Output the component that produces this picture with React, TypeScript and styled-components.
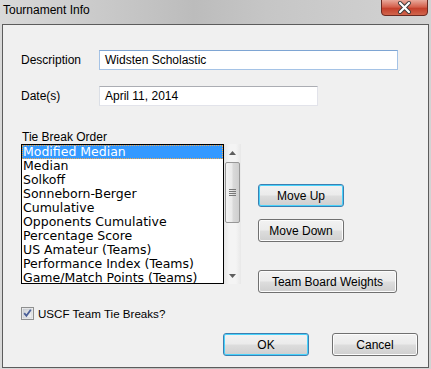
import { FunctionComponent } from 'react';
import styled, { createGlobalStyle, css } from 'styled-components';

const GlobalStyle = createGlobalStyle`
  html, body {
    margin: 0;
    padding: 0;
    background: #c8c8c8;
  }
  body {
    font-family: 'Liberation Sans', Arial, sans-serif;
  }
`;

const WindowRoot = styled.div`
  width: 431px;
  height: 369px;
  box-sizing: border-box;
  padding: 0 2px 1px 2px;
  display: flex;
  flex-direction: column;
  background: linear-gradient(
    90deg,
    #d9d9d9 0%,
    #cdcdcd 18%,
    #bcbcbc 45%,
    #c6c6c6 62%,
    #d3d3d3 100%
  );
`;

const TitleBar = styled.div`
  height: 24px;
  display: flex;
  align-items: flex-start;
  justify-content: space-between;
  padding-left: 1px;
`;

const TitleText = styled.span`
  margin-top: 3px;
  font-size: 12px;
  line-height: 14px;
  color: #000;
`;

const CloseButton = styled.div`
  width: 47px;
  height: 16px;
  margin-right: 1px;
  display: flex;
`;

const Frame = styled.div`
  flex: 1;
  box-sizing: border-box;
  width: 427px;
  border: 1px solid #5c5c5c;
  background: #f0f0f0;
  display: flex;
  flex-direction: column;
  padding: 25px 10px 11px 18px;
  font-size: 12px;
  color: #000;
`;

const FieldRow = styled.div<{ $gap?: number }>`
  display: flex;
  align-items: center;
  height: 20px;
  margin-top: ${(p) => p.$gap ?? 0}px;
`;

const Label = styled.span`
  width: 78px;
  line-height: 14px;
`;

const TextBox = styled.div<{ $width: number; $focus?: boolean }>`
  box-sizing: border-box;
  width: ${(p) => p.$width}px;
  height: 20px;
  background: #fff;
  padding-left: 5px;
  display: flex;
  align-items: center;
  ${(p) =>
    p.$focus
      ? css`
          border: 1px solid #a5c3e6;
          border-top-color: #7ea5d3;
        `
      : css`
          border: 1px solid #e2e3ea;
          border-top-color: #abadb3;
          border-left-color: #dbdfe6;
        `}
`;

const SectionLabel = styled.div`
  margin-top: 24px;
  margin-left: 1px;
  line-height: 14px;
  height: 14px;
`;

const MainArea = styled.div`
  display: flex;
  align-items: flex-start;
`;

const ListWrap = styled.div`
  display: flex;
  height: 140px;
`;

const ListBox = styled.ul`
  box-sizing: border-box;
  width: 203px;
  height: 140px;
  margin: 0;
  padding: 0;
  list-style: none;
  border: 1px solid #000;
  background: #fff;
  overflow: hidden;
  font-family: 'DejaVu Sans', Verdana, sans-serif;
  font-size: 12.5px;
`;

const ListItem = styled.li<{ $selected?: boolean }>`
  height: 14px;
  line-height: 14px;
  padding-left: 1px;
  white-space: nowrap;
  ${(p) =>
    p.$selected &&
    css`
      background: #3399ff;
      color: #fff;
      outline: 1px dotted #f5a94a;
      outline-offset: -1px;
    `}
`;

const ScrollBar = styled.div`
  width: 17px;
  height: 140px;
  box-sizing: border-box;
  display: flex;
  flex-direction: column;
  align-items: center;
  background: linear-gradient(90deg, #e6e6e6 0%, #f4f4f4 30%, #f4f4f4 70%, #e8e8e8 100%);
`;

const ArrowBox = styled.div`
  height: 17px;
  width: 17px;
  display: flex;
  align-items: center;
  justify-content: center;
`;

const Thumb = styled.div`
  box-sizing: border-box;
  width: 15px;
  height: 61px;
  margin-top: 1px;
  border: 1px solid #979797;
  border-radius: 2px;
  background: linear-gradient(90deg, #f4f4f4 0%, #eaeaea 45%, #d9d9d9 55%, #cfcfcf 100%);
  display: flex;
  align-items: center;
  justify-content: center;
`;

const Track = styled.div`
  flex: 1;
`;

const ButtonColumn = styled.div`
  display: flex;
  flex-direction: column;
  align-items: flex-start;
  margin-left: 17px;
  padding-top: 40px;
`;

const Button = styled.button<{ $width: number; $default?: boolean; $gap?: number }>`
  box-sizing: border-box;
  width: ${(p) => p.$width}px;
  height: 23px;
  margin: ${(p) => p.$gap ?? 0}px 0 0 0;
  padding: 0;
  border: 1px solid #707070;
  border-radius: 3px;
  font-family: 'Liberation Sans', Arial, sans-serif;
  font-size: 12px;
  color: #000;
  background: linear-gradient(180deg, #f2f2f2 0%, #ebebeb 48%, #dddddd 52%, #cfcfcf 100%);
  box-shadow: inset 0 0 0 1px #fcfcfc;
  ${(p) =>
    p.$default &&
    css`
      border-color: #3c7fb1;
      box-shadow: inset 0 0 0 1px #48d2fb;
    `}
`;

const CheckRow = styled.label`
  display: flex;
  align-items: center;
  margin-top: 13px;
  height: 15px;
  gap: 4px;
  font-size: 11.6px;
  line-height: 15px;
`;

const Footer = styled.div`
  margin-top: auto;
  display: flex;
  justify-content: flex-end;
  gap: 23px;
`;

const tieBreaks = [
  'Modified Median',
  'Median',
  'Solkoff',
  'Sonneborn-Berger',
  'Cumulative',
  'Opponents Cumulative',
  'Percentage Score',
  'US Amateur (Teams)',
  'Performance Index (Teams)',
  'Game/Match Points (Teams)',
];

const CloseIcon = () => (
  <svg width="47" height="16" viewBox="0 0 47 16">
    <defs>
      <linearGradient id="cg" x1="0" y1="0" x2="0" y2="1">
        <stop offset="0" stopColor="#e9a99b" />
        <stop offset="0.45" stopColor="#d4604c" />
        <stop offset="0.55" stopColor="#c4402c" />
        <stop offset="1" stopColor="#d2684f" />
      </linearGradient>
    </defs>
    <path d="M0.5 0 V12 Q0.5 15.5 4 15.5 H43 Q46.5 15.5 46.5 12 V0" fill="url(#cg)" stroke="#6b2a22" />
    <path d="M19 3 L28 12 M28 3 L19 12" stroke="#3a3a3a" strokeWidth="4" strokeLinecap="round" />
    <path d="M19 3 L28 12 M28 3 L19 12" stroke="#fff" strokeWidth="2.2" strokeLinecap="round" />
  </svg>
);

const CheckIcon = () => (
  <svg width="13" height="13" viewBox="0 0 13 13">
    <defs>
      <linearGradient id="kg" x1="0" y1="0" x2="1" y2="1">
        <stop offset="0" stopColor="#cbcfd5" />
        <stop offset="1" stopColor="#f6f6f6" />
      </linearGradient>
    </defs>
    <rect x="0.5" y="0.5" width="12" height="12" fill="#f4f4f4" stroke="#8e8f8f" />
    <rect x="2" y="2" width="9" height="9" fill="url(#kg)" stroke="#c0c4ca" strokeWidth="0.6" />
    <path d="M3.2 6.2 L5.4 8.8 L9.8 2.8" fill="none" stroke="#4a5f97" strokeWidth="1.8" />
  </svg>
);

const App: FunctionComponent = () => {
  return (
    <>
      <GlobalStyle />
      <WindowRoot>
        <TitleBar>
          <TitleText>Tournament Info</TitleText>
          <CloseButton>
            <CloseIcon />
          </CloseButton>
        </TitleBar>
        <Frame>
          <FieldRow>
            <Label>Description</Label>
            <TextBox $width={299} $focus>
              Widsten Scholastic
            </TextBox>
          </FieldRow>
          <FieldRow $gap={16}>
            <Label>Date(s)</Label>
            <TextBox $width={219}>April 11, 2014</TextBox>
          </FieldRow>
          <SectionLabel>Tie Break Order</SectionLabel>
          <MainArea>
            <ListWrap>
              <ListBox>
                {tieBreaks.map((t, i) => (
                  <ListItem key={t} $selected={i === 0}>
                    {t}
                  </ListItem>
                ))}
              </ListBox>
              <ScrollBar>
                <ArrowBox>
                  <svg width="7" height="4" viewBox="0 0 7 4">
                    <path d="M0 4 L3.5 0 L7 4 Z" fill="#5e5e5e" />
                  </svg>
                </ArrowBox>
                <Thumb>
                  <svg width="7" height="7" viewBox="0 0 7 7">
                    <path d="M0 0.5 H7 M0 2.5 H7 M0 4.5 H7 M0 6.5 H7" stroke="#777" strokeWidth="1" />
                  </svg>
                </Thumb>
                <Track />
                <ArrowBox>
                  <svg width="7" height="4" viewBox="0 0 7 4">
                    <path d="M0 0 L3.5 4 L7 0 Z" fill="#5e5e5e" />
                  </svg>
                </ArrowBox>
              </ScrollBar>
            </ListWrap>
            <ButtonColumn>
              <Button $width={86} $default>
                Move Up
              </Button>
              <Button $width={86} $gap={12}>
                Move Down
              </Button>
              <Button $width={139} $gap={28}>
                Team Board Weights
              </Button>
            </ButtonColumn>
          </MainArea>
          <CheckRow>
            <CheckIcon />
            USCF Team Tie Breaks?
          </CheckRow>
          <Footer>
            <Button $width={86} $default>
              OK
            </Button>
            <Button $width={86}>Cancel</Button>
          </Footer>
        </Frame>
      </WindowRoot>
    </>
  );
};

export default App;
